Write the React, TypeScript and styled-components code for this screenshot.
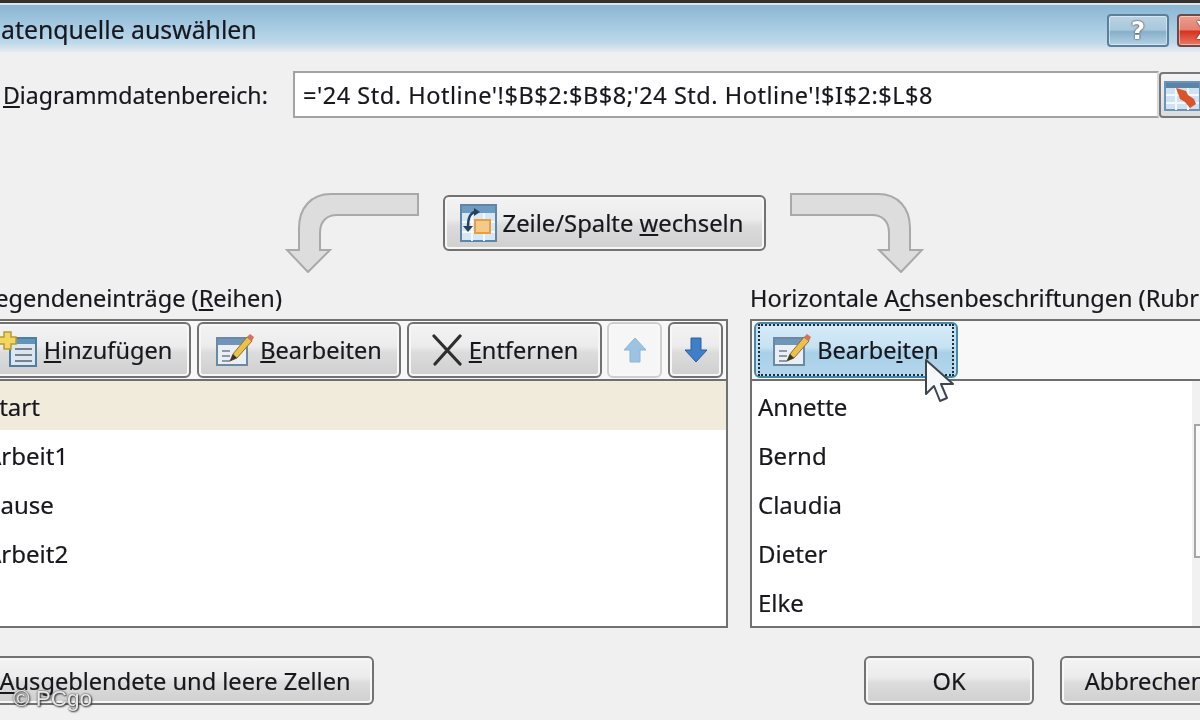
import React from "react";
import styled, { createGlobalStyle } from "styled-components";

const Global = createGlobalStyle`
  html, body { margin: 0; padding: 0; background: #f0f0f0; }
  body { font-family: "Noto Sans", "Open Sans", sans-serif; color: #17171e; }
  #root { width: 1200px; height: 720px; overflow: hidden; }
`;

const Dialog = styled.div`
  position: relative;
  width: 1200px;
  height: 720px;
  overflow: hidden;
  background: #f0f0f0;
  display: flex;
  flex-direction: column;
  filter: blur(0.5px);
  font-size: 23.5px;
  line-height: 30px;
  -webkit-text-stroke: 0.2px #17171e;
`;

const TitleBar = styled.div`
  height: 49px;
  flex: none;
  border-top: 3px solid #33302e;
  box-shadow: inset 0 2px 0 #dfe4e6;
  background: linear-gradient(#8ab6d3 4%, #a4c9e0 45%, #bcd8ea 80%, #e6ebee 100%);
  display: flex;
  align-items: center;
  justify-content: space-between;
`;

const TitleText = styled.span`
  margin-left: -17px;
  margin-top: 3px;
  font-size: 24.8px;
`;

const WindowButtons = styled.div`
  display: flex;
  gap: 8px;
  margin-right: -30px;
  margin-top: 5px;
`;

const WindowButton = styled.div<{ $close?: boolean }>`
  box-sizing: border-box;
  width: ${(p) => (p.$close ? "53px" : "62px")};
  height: 33px;
  border: 2px solid ${(p) => (p.$close ? "#6d4a48" : "#5c7f9b")};
  border-radius: 4px;
  box-shadow: inset 0 0 0 1px rgba(255, 255, 255, 0.45);
  background: ${(p) =>
    p.$close
      ? "linear-gradient(#ea9e8e 0%, #e5806f 48%, #d9301f 52%, #e57b65 100%)"
      : "linear-gradient(#b9d3e4 0%, #a9c8dc 48%, #86afc9 54%, #b3d2e5 100%)"};
  color: #fff;
  font: bold 25px/29px "DejaVu Sans", sans-serif;
  -webkit-text-stroke: 0;
  text-align: ${(p) => (p.$close ? "left" : "center")};
  padding-left: ${(p) => (p.$close ? "17px" : "0")};
  text-shadow: 0 0 2px #333, 0 0 1px #333;
`;

const RangeRow = styled.div`
  flex: none;
  display: flex;
  align-items: stretch;
  height: 47px;
  margin-top: 19px;
  margin-left: 3px;
`;

const RangeLabel = styled.label`
  width: 290px;
  line-height: 48px;
  flex: none;
  font-size: 23.1px;
`;

const RangeInput = styled.div`
  box-sizing: border-box;
  width: 866px;
  flex: none;
  background: #fff;
  border: 2px solid #a3a3a3;
  border-right-color: #d8d8d8;
  padding-left: 8px;
  line-height: 44px;
  letter-spacing: 0.53px;
  white-space: nowrap;
`;

const RangeButton = styled.div`
  box-sizing: border-box;
  width: 60px;
  height: 46px;
  margin-top: 1px;
  flex: none;
  border: 2px solid #777;
  border-radius: 4px;
  background: linear-gradient(#f4f4f4, #dcdcdc);
  padding: 7px 0 0 3px;
`;

const SwapRow = styled.div`
  flex: none;
  height: 80px;
  margin-top: 75px;
  padding-left: 285px;
  display: flex;
  align-items: flex-start;
  gap: 24px;
`;

const CurveArrow = styled.svg<{ $mirror?: boolean }>`
  flex: none;
  transform: ${(p) => (p.$mirror ? "scaleX(-1)" : "none")};
`;

const Button = styled.div<{ $w: number; $h?: number; $focus?: boolean; $ghost?: boolean; $shift?: number }>`
  box-sizing: border-box;
  flex: none;
  width: ${(p) => p.$w}px;
  height: ${(p) => p.$h ?? 56}px;
  padding-right: ${(p) => p.$shift ?? 0}px;
  display: flex;
  align-items: center;
  justify-content: center;
  gap: 6px;
  white-space: nowrap;
  border: 2px solid ${(p) => (p.$focus ? "#4a86a8" : p.$ghost ? "#cfcfcf" : "#727272")};
  border-radius: 6px;
  box-shadow: inset 0 0 0 2px ${(p) => (p.$focus ? "#bfe0f2" : p.$ghost ? "#f8f8f8" : "#f7f7f7")};
  background: ${(p) =>
    p.$focus
      ? "linear-gradient(#d7ecf8 0%, #c5e2f3 45%, #a9d0e8 55%, #b3d6ec 100%)"
      : p.$ghost
        ? "#f6f6f6"
        : "linear-gradient(#f3f3f3 0%, #ececec 42%, #dcdcdc 55%, #cfcfcf 100%)"};
`;

const SwapButton = styled(Button)`
  margin-top: 2px;
  font-size: 23.8px;
`;

const FooterButton = styled(Button)`
  font-size: 23.6px;
`;

const FocusRing = styled.div`
  box-sizing: border-box;
  width: 100%;
  height: 100%;
  margin: 2px;
  border: 2px dotted #1d2c38;
  display: flex;
  align-items: center;
  justify-content: center;
  gap: 6px;
`;

const Columns = styled.div`
  flex: none;
  margin-top: 10px;
  margin-left: -10px;
  display: grid;
  grid-template-columns: 738px 460px;
  column-gap: 22px;
`;

const SectionLabel = styled.div<{ $left?: number }>`
  height: 36px;
  line-height: 30px;
  white-space: nowrap;
  margin-left: ${(p) => p.$left ?? 0}px;
`;

const Panel = styled.div`
  box-sizing: border-box;
  height: 309px;
  border: 2px solid #717171;
  background: #fff;
  display: flex;
  flex-direction: column;
`;

const Toolbar = styled.div`
  flex: none;
  box-sizing: border-box;
  height: 60px;
  border-bottom: 2px solid #6f6f6f;
  background: #f8f8f8;
  display: flex;
  align-items: center;
  gap: 6px;
  padding: 0 3px 1px 2px;
`;

const LeftTools = styled(Toolbar)`
  padding-left: 0;
  justify-content: flex-end;
`;

const ArrowTools = styled.div`
  display: flex;
  gap: 6px;
  margin-left: -1px;
`;

const ListArea = styled.div`
  position: relative;
  flex: 1;
  overflow: hidden;
`;

const Row = styled.div<{ $selected?: boolean; $indent: number }>`
  height: 49px;
  line-height: 51px;
  font-size: 24px;
  text-indent: ${(p) => p.$indent}px;
  background: ${(p) => (p.$selected ? "#f1ebdc" : "transparent")};
`;

const ScrollTrack = styled.div`
  position: absolute;
  top: 0;
  right: 0;
  bottom: 0;
  width: 16px;
  background: #f1f1f1;
`;

const ScrollThumb = styled.div`
  position: absolute;
  top: 43px;
  left: 2px;
  right: 0;
  height: 130px;
  border: 2px solid #a5a5a5;
  border-right: 0;
  background: #fafafa;
`;

const Footer = styled.div`
  flex: none;
  margin-top: 28px;
  margin-left: -10px;
  display: flex;
  justify-content: space-between;
`;

const FooterRight = styled.div`
  display: flex;
  gap: 26px;
  margin-right: -30px;
`;

const Cursor = styled.svg`
  position: absolute;
  left: 924px;
  top: 358px;
`;

const Watermark = styled.div`
  position: absolute;
  left: 13px;
  top: 684px;
  font-family: "Liberation Sans", sans-serif;
  font-size: 22.5px;
  line-height: 30px;
  color: #e8e8e8;
  -webkit-text-stroke: 0;
  text-shadow: 0 0 2px #333, 1px 1px 2px #333;
`;

const AddIcon = () => (
  <svg width="40" height="38" viewBox="0 0 40 38">
    <rect x="12" y="7" width="26" height="28" fill="#dbe6f0" stroke="#4f7ea3" strokeWidth="2" />
    <rect x="13" y="8" width="24" height="5" fill="#5f95bd" />
    <path d="M17 18h17M17 24h17M17 30h17" stroke="#77828c" strokeWidth="2" />
    <path d="M6 1h7v5h5v7h-5v5H6v-5H1V6h5z" fill="#f2d660" stroke="#b89b32" strokeWidth="1.5" />
  </svg>
);

const EditIcon = () => (
  <svg width="38" height="34" viewBox="0 0 38 34">
    <rect x="1" y="5" width="30" height="27" fill="#e9eff5" stroke="#6b89a6" strokeWidth="2" />
    <rect x="2" y="6" width="28" height="6" fill="#6f96b8" />
    <path d="M6 18h8M6 23h8M6 28h8" stroke="#8d99a5" strokeWidth="2" />
    <path d="M14 28l3-7L31 4l5 4-15 17z" fill="#ecc04d" stroke="#8a6f2a" strokeWidth="1" />
    <path d="M31 4l3-3 4 3-2 4z" fill="#d9705f" />
    <path d="M14 28l3-7 4 4z" fill="#333" />
  </svg>
);

const DeleteIcon = () => (
  <svg width="32" height="32" viewBox="0 0 32 32">
    <path d="M3 2l26 28M29 2L4 30" stroke="#2e2e2e" strokeWidth="3.2" strokeLinecap="round" fill="none" />
  </svg>
);

const BlockArrow = ({ down, color, edge }: { down?: boolean; color: string; edge: string }) => (
  <svg width="24" height="26" viewBox="0 0 24 26">
    <path
      d={down ? "M7 1h10v12h6L12 25 1 13h6z" : "M12 1l11 12h-6v12H7V13H1z"}
      fill={color}
      stroke={edge}
      strokeWidth="1"
    />
  </svg>
);

const SwapIcon = () => (
  <svg width="37" height="38" viewBox="0 0 37 38">
    <rect x="1" y="1" width="35" height="36" fill="#d6e7f6" stroke="#5f86a8" strokeWidth="2" />
    <rect x="2" y="2" width="33" height="7" fill="#6f9ac2" />
    <path d="M2 18h33M2 28h33M12 9v28M24 9v28" stroke="#f4f8fc" strokeWidth="2" />
    <rect x="15" y="16" width="15" height="13" fill="#f4c98a" stroke="#e49f45" strokeWidth="2" />
    <path d="M17 7C9 9 8 15 8 24" stroke="#27415c" strokeWidth="2.5" fill="none" />
    <path d="M3 22h10l-5 6z M14 4v8l6-4z" fill="#27415c" />
  </svg>
);

const RangeIcon = () => (
  <svg width="37" height="30" viewBox="0 0 37 30">
    <rect x="1" y="1" width="35" height="28" fill="#cfe2f2" stroke="#6b93b5" strokeWidth="2" />
    <rect x="2" y="2" width="33" height="5" fill="#5b84a8" />
    <path d="M2 14h33M2 22h33M12 7v22M24 7v22" stroke="#f4f8fc" strokeWidth="2" />
    <path d="M12 7l10 3 2 4 6 4 2 5-6 4-5-6-5-3z" fill="#d9532b" />
  </svg>
);

const ArrowShape = ({ mirror }: { mirror?: boolean }) => (
  <CurveArrow $mirror={mirror} width="134" height="80" viewBox="0 0 134 80">
    <path
      d="M133 1H46C26 1 14 15 14 35V57H2L23 79 45 57H35V40C35 28 42 22 52 22H133Z"
      fill="#dddddd"
      stroke="#a9a9a9"
      strokeWidth="2"
    />
  </CurveArrow>
);

export default function App() {
  return (
    <>
      <Global />
      <Dialog>
        <TitleBar>
          <TitleText>Datenquelle auswählen</TitleText>
          <WindowButtons>
            <WindowButton>?</WindowButton>
            <WindowButton $close>X</WindowButton>
          </WindowButtons>
        </TitleBar>

        <RangeRow>
          <RangeLabel>
            <u>D</u>iagrammdatenbereich:
          </RangeLabel>
          <RangeInput>='24 Std. Hotline'!$B$2:$B$8;'24 Std. Hotline'!$I$2:$L$8</RangeInput>
          <RangeButton>
            <RangeIcon />
          </RangeButton>
        </RangeRow>

        <SwapRow>
          <ArrowShape />
          <SwapButton $w={323} $shift={6}>
            <SwapIcon />
            <span>
              Zeile/Spalte <u>w</u>echseln
            </span>
          </SwapButton>
          <ArrowShape mirror />
        </SwapRow>

        <Columns>
          <div>
            <SectionLabel $left={-7}>
              Legendeneinträge (<u>R</u>eihen)
            </SectionLabel>
            <Panel>
              <LeftTools>
                <Button $w={200} $shift={12}>
                  <AddIcon />
                  <span>
                    <u>H</u>inzufügen
                  </span>
                </Button>
                <Button $w={204}>
                  <EditIcon />
                  <span>
                    <u>B</u>earbeiten
                  </span>
                </Button>
                <Button $w={195}>
                  <DeleteIcon />
                  <span>
                    <u>E</u>ntfernen
                  </span>
                </Button>
                <ArrowTools>
                  <Button $w={55} $ghost>
                    <BlockArrow color="#9cc3e2" edge="#8fb4d2" />
                  </Button>
                  <Button $w={55}>
                    <BlockArrow down color="#3f7fc9" edge="#2c5f9c" />
                  </Button>
                </ArrowTools>
              </LeftTools>
              <ListArea>
                <Row $selected $indent={-6}>Start</Row>
                <Row $indent={-6}>Arbeit1</Row>
                <Row $indent={-6}>Pause</Row>
                <Row $indent={-6}>Arbeit2</Row>
              </ListArea>
            </Panel>
          </div>
          <div>
            <SectionLabel>
              Horizontale A<u>c</u>hsenbeschriftungen (Rubrikenachse)
            </SectionLabel>
            <Panel>
              <Toolbar>
                <Button $w={204} $focus>
                  <FocusRing>
                    <EditIcon />
                    <span>
                      Bearbe<u>i</u>ten
                    </span>
                  </FocusRing>
                </Button>
              </Toolbar>
              <ListArea>
                {["Annette", "Bernd", "Claudia", "Dieter", "Elke"].map((n) => (
                  <Row key={n} $indent={6}>
                    {n}
                  </Row>
                ))}
                <ScrollTrack>
                  <ScrollThumb />
                </ScrollTrack>
              </ListArea>
            </Panel>
          </div>
        </Columns>

        <Footer>
          <FooterButton $w={384} $h={49} $shift={14}>
            <span>
              <u>A</u>usgeblendete und leere Zellen
            </span>
          </FooterButton>
          <FooterRight>
            <FooterButton $w={170} $h={49}>OK</FooterButton>
            <FooterButton $w={170} $h={49}>Abbrechen</FooterButton>
          </FooterRight>
        </Footer>

        <Cursor width="32" height="46" viewBox="0 0 32 46">
          <path
            d="M2 2V36L10 28 16 43 23 40 17 26H29Z"
            fill="#f6f8fa"
            stroke="#3c4650"
            strokeWidth="2"
            strokeLinejoin="round"
          />
        </Cursor>
        <Watermark>© PCgo</Watermark>
      </Dialog>
    </>
  );
}
